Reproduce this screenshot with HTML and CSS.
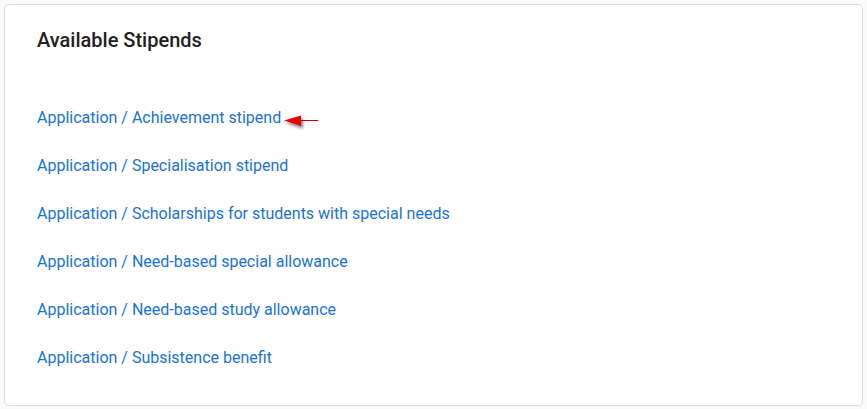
FILE: index.html
```html
<!DOCTYPE html>
<html lang="en">
<head>
    <meta charset="UTF-8">
    <meta name="viewport" content="width=device-width, initial-scale=1.0">
    <title>Available Stipends</title>
    <link rel="stylesheet" href="styles.css">
</head>
<body>

<div class="card">
    <h2 class="card-title">Available Stipends</h2>
    <ul class="stipend-list">
        <li class="stipend-item">
            <a href="#" class="stipend-link">Application / Achievement stipend</a>
            <svg class="pointer" width="40" height="22" viewBox="0 0 40 22">
                <defs>
                    <filter id="shade" x="-30%" y="-50%" width="180%" height="220%">
                        <feDropShadow dx="2" dy="2.5" stdDeviation="1.5" flood-color="#000" flood-opacity="0.5"/>
                    </filter>
                </defs>
                <line x1="18" y1="9.5" x2="36" y2="9.5" stroke="#c40000" stroke-width="1"/>
                <polygon points="2,9.5 19,4.5 19,15" fill="#e60000" filter="url(#shade)"/>
            </svg>
        </li>
        <li class="stipend-item"><a href="#" class="stipend-link">Application / Specialisation stipend</a></li>
        <li class="stipend-item"><a href="#" class="stipend-link">Application / Scholarships for students with special needs</a></li>
        <li class="stipend-item"><a href="#" class="stipend-link">Application / Need-based special allowance</a></li>
        <li class="stipend-item"><a href="#" class="stipend-link">Application / Need-based study allowance</a></li>
        <li class="stipend-item"><a href="#" class="stipend-link">Application / Subsistence benefit</a></li>
    </ul>
</div>

</body>
</html>
```

FILE: styles.css
```css
body {
    font-family: Roboto, "Liberation Sans", Arial, sans-serif;
    margin: 4px;
    background-color: #fafafa;
}
.card {
    height: 402px;
    box-sizing: border-box;
    padding: 23px 32px;
    border: 1px solid #dcdcdc;
    border-radius: 5px;
    background-color: #fff;
}
.card-title {
    margin: 0;
    font-size: 20px;
    font-weight: 500;
    line-height: 24px;
    color: #212121;
}
.stipend-list {
    list-style: none;
    margin: 42px 0 0;
    padding: 0;
}
.stipend-item {
    position: relative;
    height: 48px;
    line-height: 48px;
}
.stipend-link {
    font-size: 16px;
    color: #1a73d2;
    text-decoration: none;
}
.pointer {
    position: absolute;
    left: 245px;
    top: 17px;
}
```
